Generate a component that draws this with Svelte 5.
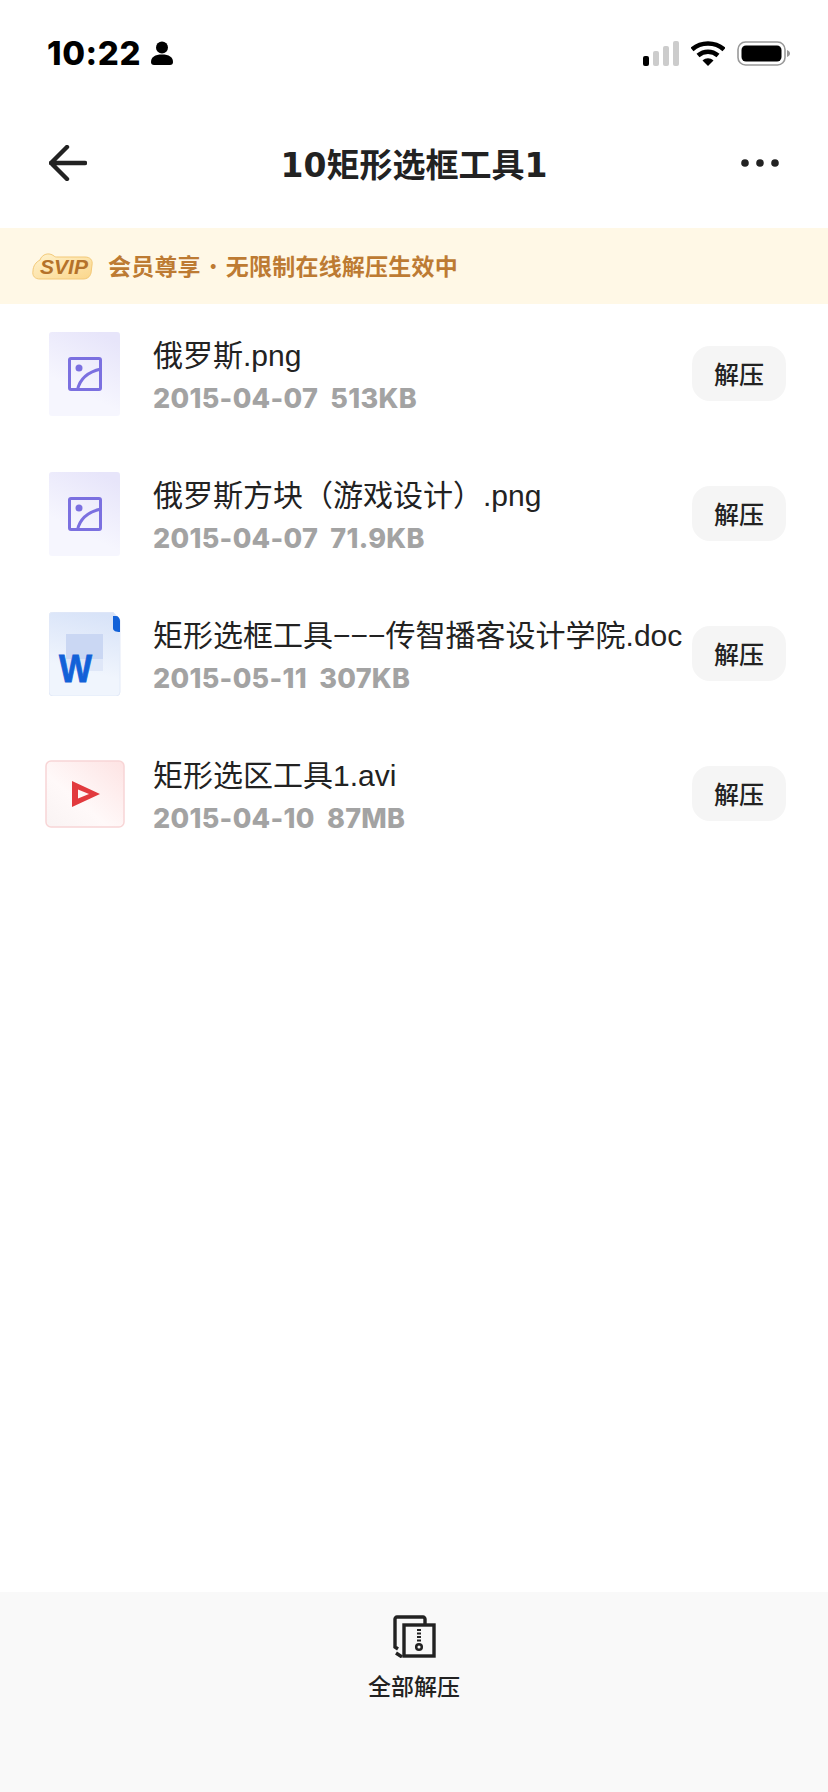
<script lang="ts">
  const files = [
    { name: '俄罗斯.png', date: '2015-04-07', size: '513KB', kind: 'image' },
    { name: '俄罗斯方块（游戏设计）.png', date: '2015-04-07', size: '71.9KB', kind: 'image' },
    { name: '矩形选框工具−−−传智播客设计学院.doc', date: '2015-05-11', size: '307KB', kind: 'word' },
    { name: '矩形选区工具1.avi', date: '2015-04-10', size: '87MB', kind: 'video' }
  ]
</script>

<div class="page">
  <div class="status">
    <div class="clock">
      <span class="time">10:22</span>
      <svg width="22" height="24" viewBox="0 0 22 24">
        <circle cx="11" cy="6.500" r="6" fill="#000" />
        <path d="M0 21c0-5 4-7.500 11-7.500S22 16 22 21c0 2-1 3-3 3H3c-2 0-3-1-3-3z" fill="#000" />
      </svg>
    </div>
    <div class="indicators">
      <svg width="36" height="25" viewBox="0 0 36 25">
        <rect x="0" y="15" width="6" height="10" rx="2" fill="#000" />
        <rect x="10" y="10" width="6" height="15" rx="2" fill="#ccc" />
        <rect x="20" y="5" width="6" height="20" rx="2" fill="#ccc" />
        <rect x="30" y="0" width="6" height="25" rx="2" fill="#ccc" />
      </svg>
      <svg width="34" height="25" viewBox="0 0 34 25">
        <path d="M1 8.500C10 .5 24 .5 33 8.500" fill="none" stroke="#000" stroke-width="4.600" />
        <path d="M7 14.500C13 9.500 21 9.500 27 14.500" fill="none" stroke="#000" stroke-width="4.600" />
        <path d="M11.500 19.500C15 16.500 19 16.500 22.500 19.500L17 25z" fill="#000" />
      </svg>
      <svg width="53" height="25" viewBox="0 0 53 25">
        <rect x="1" y="1" width="47" height="23" rx="7.500" fill="none" stroke="#999" stroke-width="1.600" />
        <rect x="4.500" y="4.500" width="40" height="16" rx="4.500" fill="#000" />
        <path d="M50 9c2 .8 3 2 3 3.500s-1 2.700-3 3.500z" fill="#999" />
      </svg>
    </div>
  </div>

  <header class="nav">
    <svg width="38" height="36" viewBox="0 0 38 36">
      <path d="M18 2 2 18l16 16M2 18h34" fill="none" stroke="#222" stroke-width="4.400" stroke-linecap="round" stroke-linejoin="round" />
    </svg>
    <h1>10矩形选框工具1</h1>
    <svg width="38" height="36" viewBox="0 0 38 36">
      <circle cx="4" cy="18" r="3.800" fill="#222" />
      <circle cx="19" cy="18" r="3.800" fill="#222" />
      <circle cx="34" cy="18" r="3.800" fill="#222" />
    </svg>
  </header>

  <div class="banner">
    <svg class="badge" width="61" height="29" viewBox="0 0 61 29">
      <defs>
        <linearGradient id="badge-fill" x1="0" y1="0" x2="1" y2="1">
          <stop offset="0" stop-color="#fff3cf" />
          <stop offset="1" stop-color="#fbd68a" />
        </linearGradient>
      </defs>
      <path d="M8 8C10 2 17 0 22 4c1 1 2 1 4 1h27c5 0 8 3 7 8l-1 8c-1 4-4 6-8 6H8c-5 0-8-3-7-8 0-5 3-9 7-11z" fill="url(#badge-fill)" stroke="#f3c978" />
      <text x="32" y="22" text-anchor="middle" class="badge-text">SVIP</text>
    </svg>
    <p>会员尊享 <span class="dot">·</span> 无限制在线解压生效中</p>
  </div>

  <ul class="files">
    {#each files as file (file.name)}
      <li class="file">
        <div class="thumb">
          {#if file.kind === 'image'}
            <svg width="72" height="84" viewBox="0 0 72 84">
              <defs>
                <linearGradient id="image-bg" x1="0.7" y1="0" x2="0.4" y2="0.7">
                  <stop offset="0" stop-color="#e7e5fa" />
                  <stop offset="1" stop-color="#f6f6fe" />
                </linearGradient>
              </defs>
              <rect width="71" height="84" rx="3" fill="url(#image-bg)" />
              <rect x="20.500" y="26.500" width="31" height="31" rx="1.500" fill="none" stroke="#7b70e0" stroke-width="3" />
              <circle cx="30" cy="36" r="3.500" fill="#7b70e0" />
              <path d="M28.500 58c2-10 10-18 23.500-21" fill="none" stroke="#7b70e0" stroke-width="3" />
            </svg>
          {:else if file.kind === 'word'}
            <svg width="72" height="84" viewBox="0 0 72 84">
              <defs>
                <linearGradient id="word-bg" x1="0.6" y1="0" x2="0.4" y2="1">
                  <stop offset="0" stop-color="#d8e3f8" />
                  <stop offset="0.7" stop-color="#f0f5fd" />
                </linearGradient>
              </defs>
              <path d="M4 0h60l7 8v72a4 4 0 0 1-4 4H4a4 4 0 0 1-4-4V4a4 4 0 0 1 4-4z" fill="url(#word-bg)" stroke="#e3eaf8" />
              <path d="M64 4h3c2 0 4 2 4 5v11c-4 0-7-1-7-4z" fill="#1261d8" />
              <rect x="17" y="22" width="37" height="25" fill="#cad7f3" />
              <rect x="17" y="47" width="37" height="12" fill="#dfe7f8" />
              <text x="10" y="70" textLength="33" lengthAdjust="spacingAndGlyphs" class="word-letter">W</text>
            </svg>
          {:else}
            <svg width="80" height="68" viewBox="0 0 80 68">
              <defs>
                <linearGradient id="video-bg" x1="1" y1="0" x2="0" y2="1">
                  <stop offset="0" stop-color="#fde3e3" />
                  <stop offset="0.6" stop-color="#fff9f9" />
                  <stop offset="1" stop-color="#f9f3f3" />
                </linearGradient>
              </defs>
              <rect x="1" y="1" width="78" height="66" rx="5" fill="url(#video-bg)" stroke="#f8d5d6" stroke-width="1.500" />
              <path d="M27 21 55 34 27 47zM33 29.500V38.500L44 34z" fill="#e23a3e" fill-rule="evenodd" />
            </svg>
          {/if}
        </div>
        <div class="info">
          <div class="name">{file.name}</div>
          <div class="meta">{file.date} {file.size}</div>
        </div>
        <button class="extract">解压</button>
      </li>
    {/each}
  </ul>

  <footer class="bottom">
    <svg width="44" height="44" viewBox="0 0 44 44">
      <path d="M33 11V5a2 2 0 0 0-2-2H5a2 2 0 0 0-2 2v28l3 2" fill="none" stroke="#222" stroke-width="3.400" />
      <path d="M4 39l6 4" fill="none" stroke="#222" stroke-width="3.400" />
      <rect x="12" y="11" width="30" height="31" fill="none" stroke="#222" stroke-width="3.400" />
      <path d="M27 15v14" fill="none" stroke="#222" stroke-width="4" stroke-dasharray="2 1.500" />
      <circle cx="27" cy="33" r="2.800" fill="none" stroke="#222" stroke-width="2.500" />
    </svg>
    <span>全部解压</span>
  </footer>
</div>

<style>
  :global(body) {
    margin: 0;
    background: #fff;
  }

  .page {
    width: 828px;
    height: 1792px;
    display: flex;
    flex-direction: column;
    color: #222;
    font-family: "Liberation Sans", "Noto Sans CJK SC", sans-serif;
  }

  .status {
    height: 98px;
    box-sizing: border-box;
    padding: 8px 38px 0 47px;
    display: flex;
    align-items: center;
    justify-content: space-between;
  }

  .clock {
    display: flex;
    align-items: center;
    gap: 10px;
  }

  .time {
    font-family: Inter, sans-serif;
    font-size: 33px;
    font-weight: 800;
    line-height: 36px;
    letter-spacing: 0.6px;
    color: #000;
  }

  .indicators {
    display: flex;
    align-items: center;
    gap: 12px;
  }

  .nav {
    height: 130px;
    box-sizing: border-box;
    padding: 0 49px;
    display: flex;
    align-items: center;
    justify-content: space-between;
  }

  .nav h1 {
    margin: 0;
    font-family: "DejaVu Sans", "Noto Sans CJK SC", sans-serif;
    font-size: 33px;
    font-weight: 700;
    color: #222;
  }

  .banner {
    height: 76px;
    padding-left: 32px;
    display: flex;
    align-items: center;
    gap: 15px;
    background: #fff8e6;
    color: #bd7b33;
    font-family: "Noto Sans CJK SC", sans-serif;
    font-size: 23px;
    font-weight: 700;
  }

  .banner p {
    margin: 0 0 3px;
    letter-spacing: 0.2px;
    word-spacing: -4.5px;
  }

  .dot {
    font-weight: 400;
  }

  .badge-text {
    font-family: "Liberation Sans", sans-serif;
    font-size: 21px;
    font-weight: 700;
    font-style: italic;
    fill: #b4722a;
  }

  .word-letter {
    font-family: "Liberation Sans", sans-serif;
    font-size: 38px;
    font-weight: 700;
    fill: #1261d8;
    stroke: #1261d8;
    stroke-width: 0.8px;
  }

  .files {
    margin: 0;
    padding: 0;
    list-style: none;
    flex: 1;
  }

  .file {
    height: 140px;
    box-sizing: border-box;
    padding: 0 42px 0 45px;
    display: flex;
    align-items: center;
  }

  .thumb {
    width: 80px;
    margin-right: 28px;
    display: flex;
    justify-content: center;
  }

  .thumb svg {
    display: block;
  }

  .info {
    flex: 1;
    min-width: 0;
    padding-top: 3px;
    display: flex;
    flex-direction: column;
    gap: 6px;
  }

  .name {
    font-size: 30px;
    line-height: 40px;
    color: #222;
    white-space: nowrap;
  }

  .meta {
    font-family: Inter, sans-serif;
    font-size: 27px;
    font-weight: 800;
    line-height: 34px;
    letter-spacing: 0.3px;
    color: #a3a3a3;
    word-spacing: 6px;
  }

  .extract {
    width: 94px;
    height: 55px;
    flex-shrink: 0;
    margin-bottom: 2px;
    padding: 0;
    border: none;
    border-radius: 18px;
    background: #f5f5f5;
    color: #222;
    font-family: "Noto Sans CJK SC", sans-serif;
    font-size: 25px;
    font-weight: 500;
  }

  .bottom {
    height: 200px;
    box-sizing: border-box;
    padding-top: 22px;
    display: flex;
    flex-direction: column;
    align-items: center;
    gap: 10px;
    background: #f9f9f9;
    font-family: "Noto Sans CJK SC", sans-serif;
    font-size: 23px;
    font-weight: 500;
    line-height: 34px;
  }
</style>
